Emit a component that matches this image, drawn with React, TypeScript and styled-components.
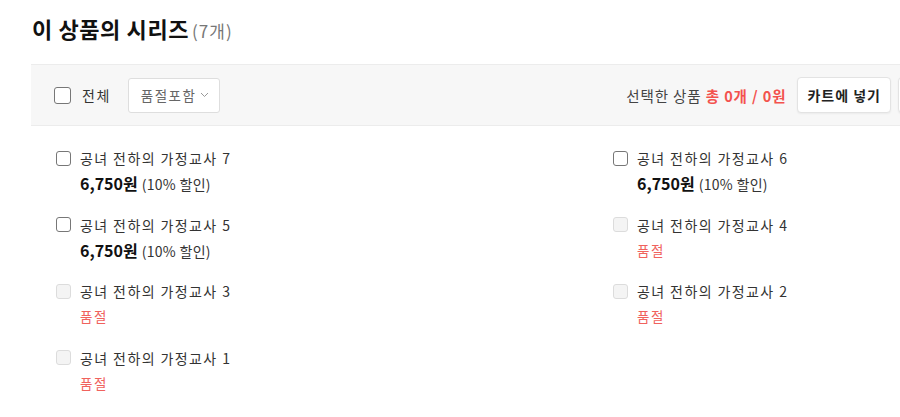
import React from 'react';
import styled, { createGlobalStyle } from 'styled-components';

const GlobalStyle = createGlobalStyle`
  html, body {
    margin: 0;
    padding: 0;
    background: #fff;
    overflow: hidden;
  }
  body {
    font-family: "Noto Sans CJK KR", "Noto Sans", sans-serif;
    color: #222;
  }
`;

const Page = styled.section`
  width: 1020px;
  padding: 14px 0 0 31px;
`;

const Title = styled.h2`
  display: flex;
  align-items: baseline;
  gap: 3px;
  margin: 0 0 0 1px;
  height: 36px;
  font-size: 22px;
  font-weight: 700;
  line-height: 29px;
  color: #111;
  letter-spacing: 0.6px;
  & span {
    font-size: 17px;
    font-weight: 400;
    color: #777;
    letter-spacing: 1px;
  }
`;

const Toolbar = styled.div`
  display: flex;
  align-items: center;
  justify-content: space-between;
  width: 971px;
  height: 62px;
  margin-top: 14px;
  padding: 0 10px 0 23px;
  box-sizing: border-box;
  background: #f7f7f7;
  border-top: 1px solid #ececec;
  border-bottom: 1px solid #ececec;
`;

const Group = styled.div<{ $gap: number }>`
  display: flex;
  align-items: center;
  gap: ${(p) => p.$gap}px;
`;

const Check = styled.span<{ $disabled?: boolean; $size?: number }>`
  display: inline-block;
  flex: none;
  width: ${(p) => p.$size ?? 13}px;
  height: ${(p) => p.$size ?? 13}px;
  border: 1px solid ${(p) => (p.$disabled ? '#dcdcdc' : '#777')};
  background: ${(p) => (p.$disabled ? '#f4f4f4' : '#fff')};
  border-radius: 3px;
`;

const Label = styled.label`
  display: flex;
  align-items: center;
  gap: 11px;
  font-size: 14px;
  color: #333;
  letter-spacing: 1.5px;
`;

const Select = styled.button`
  display: flex;
  align-items: center;
  gap: 4px;
  height: 35px;
  margin-left: 17px;
  padding: 0 10px 0 12px;
  background: #fff;
  border: 1px solid #dedede;
  border-radius: 3px;
  font-family: inherit;
  font-size: 13.5px;
  letter-spacing: 1.5px;
  color: #666;
`;

const Summary = styled.p`
  margin: 0 4px 0 0;
  font-size: 14.5px;
  letter-spacing: 0.9px;
  color: #444;
  & strong {
    color: #f3524e;
    font-weight: 700;
  }
`;

const Button = styled.button<{ $clipped?: boolean }>`
  height: 36px;
  min-width: ${(p) => (p.$clipped ? '94px' : 'auto')};
  padding: 0 9px;
  background: #fff;
  border: 1px solid #e3e3e3;
  border-radius: 4px;
  box-shadow: 0 1px 2px rgba(0, 0, 0, 0.05);
  font-family: inherit;
  font-size: 14px;
  font-weight: 700;
  letter-spacing: 1px;
  color: #222;
  white-space: nowrap;
`;

const List = styled.ul`
  display: grid;
  grid-template-columns: 557px 1fr;
  row-gap: 21.5px;
  list-style: none;
  margin: 0;
  padding: 22px 0 0 25px;
`;

const Item = styled.li`
  display: grid;
  grid-template-columns: 24px auto;
  grid-template-rows: 20px 20px;
  row-gap: 5px;
  align-items: center;
`;

const Name = styled.span`
  font-size: 14px;
  color: #333;
  letter-spacing: 1.4px;
`;

const Price = styled.span`
  grid-column: 2;
  font-size: 14px;
  color: #333;
  letter-spacing: 0.3px;
  & b {
    font-size: 16px;
    font-weight: 700;
    color: #111;
    letter-spacing: 0;
    margin-right: 4px;
  }
`;

const SoldOut = styled.span`
  grid-column: 2;
  font-size: 13.5px;
  letter-spacing: 1.5px;
  color: #f0625d;
`;

const Chevron = () => (
  <svg width="9" height="6" viewBox="0 0 9 6" fill="none">
    <path d="M1 1l3.5 3.5L8 1" stroke="#999" strokeWidth="1" />
  </svg>
);

const items = [
  { n: 7, sold: false },
  { n: 6, sold: false },
  { n: 5, sold: false },
  { n: 4, sold: true },
  { n: 3, sold: true },
  { n: 2, sold: true },
  { n: 1, sold: true },
];

const App: React.FC = () => {
  return (
    <>
      <GlobalStyle />
      <Page>
        <Title>
          이 상품의 시리즈 <span>(7개)</span>
        </Title>
        <Toolbar>
          <Group $gap={0}>
            <Label>
              <Check $size={15} />
              전체
            </Label>
            <Select>
              품절포함 <Chevron />
            </Select>
          </Group>
          <Group $gap={7}>
            <Summary>
              선택한 상품 <strong>총 0개 / 0원</strong>
            </Summary>
            <Button>카트에 넣기</Button>
            <Button $clipped aria-label="바로 구매하기" />
          </Group>
        </Toolbar>
        <List>
          {items.map((it) => (
            <Item key={it.n}>
              <Check $disabled={it.sold} />
              <Name>공녀 전하의 가정교사 {it.n}</Name>
              {it.sold ? (
                <SoldOut>품절</SoldOut>
              ) : (
                <Price>
                  <b>6,750원</b>(10% 할인)
                </Price>
              )}
            </Item>
          ))}
        </List>
      </Page>
    </>
  );
};

export default App;
